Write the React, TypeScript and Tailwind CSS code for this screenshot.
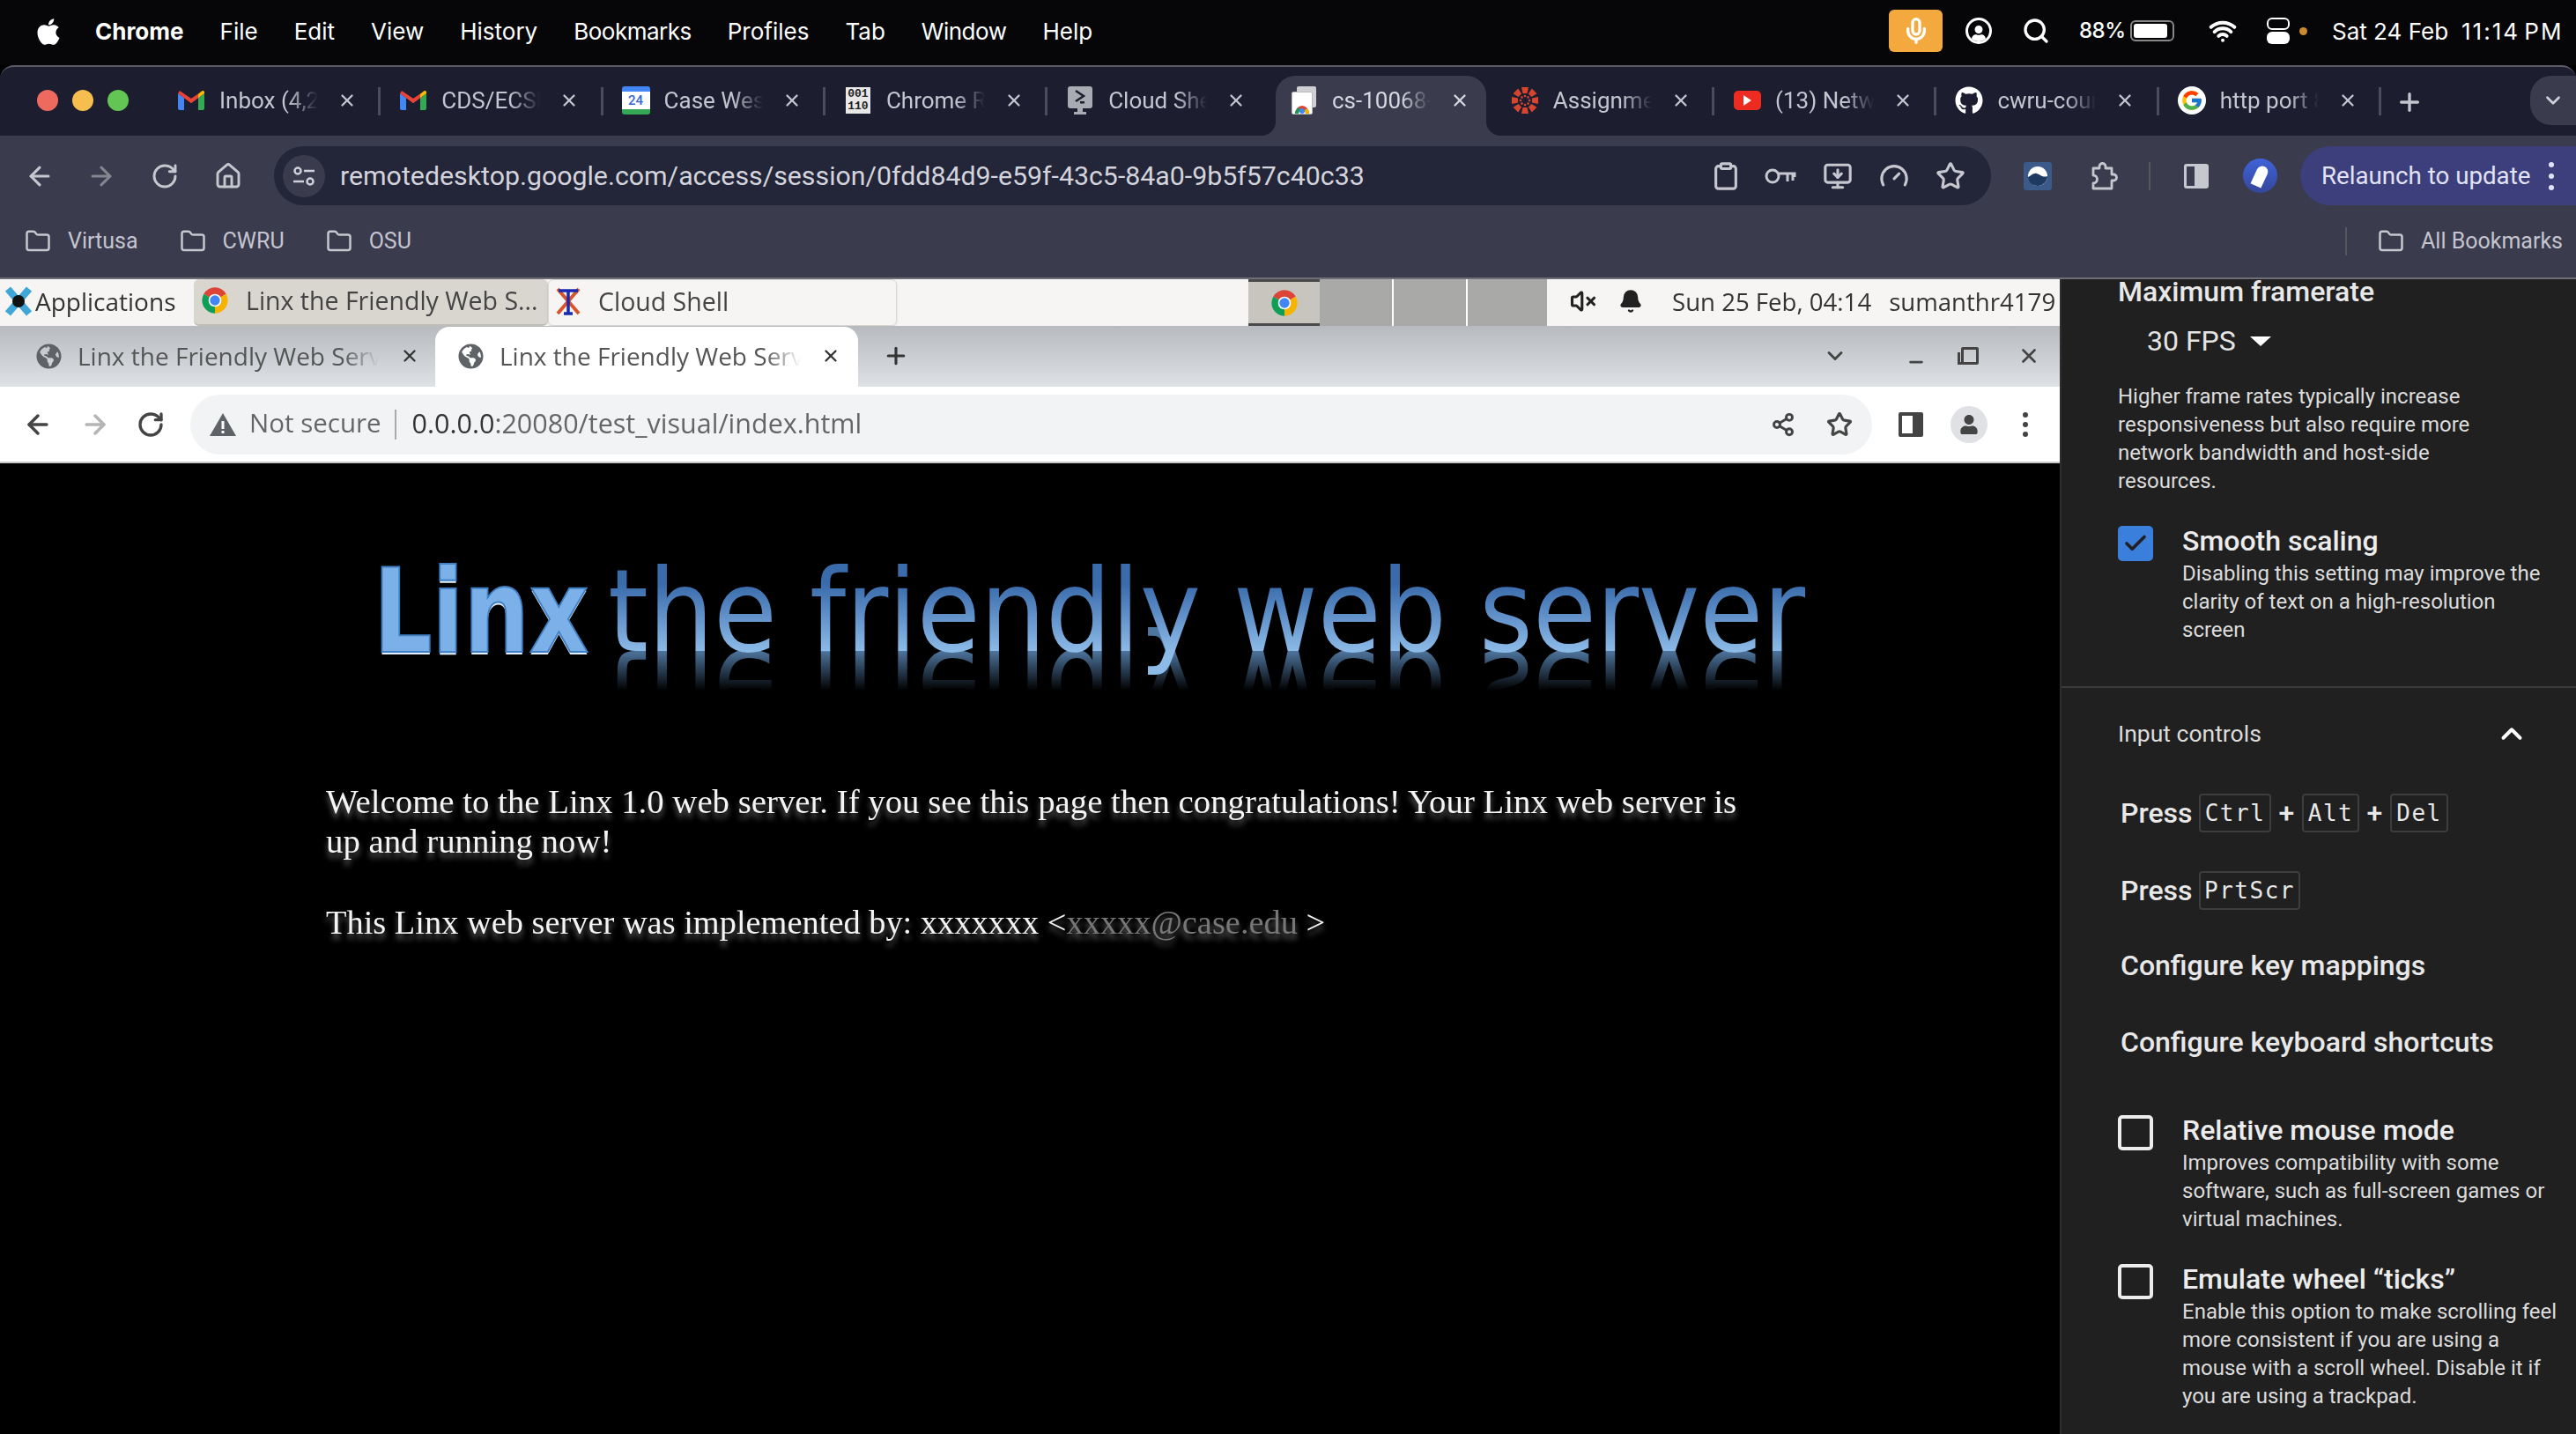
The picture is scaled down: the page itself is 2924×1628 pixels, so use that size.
import React from "react";
import { ArrowLeft, ArrowRight, RotateCw, Home, X, Plus, ChevronDown, ChevronUp, Clipboard, MonitorDown, Gauge, Star, Folder, Search, Wifi, Mic, Share2, Minus, Check, Bell, VolumeX } from "lucide-react";
import { FaApple, FaGithub, FaGlobeAmericas, FaUser } from "react-icons/fa";
import { FcGoogle } from "react-icons/fc";

const Gmail = () => (
  <svg viewBox="0 0 30 22" className="w-[30px] h-[22px]">
    <path fill="#4285F4" d="M0 3v17a2 2 0 0 0 2 2h5V8z" />
    <path fill="#34A853" d="M30 3v17a2 2 0 0 1-2 2h-5V8z" />
    <path fill="#EA4335" d="M0 3l15 11L30 3l-2-3-13 9L2 0z" />
    <path fill="#EA4335" d="M7 8l8 6 8-6V4l-8 5-8-5z" />
    <path fill="#FBBC04" d="M23 4l4-3.500A2 2 0 0 1 30 3l-7 5z" />
  </svg>
);
const Chromium = ({ s }: { s: string }) => (
  <svg viewBox="0 0 48 48" className={s}>
    <path fill="#DB4437" d="M24 24L4.950 13A22 22 0 0 1 43.050 13Z" />
    <path fill="#F4B400" d="M24 24L43.050 13A22 22 0 0 1 24 46Z" />
    <path fill="#0F9D58" d="M24 24L24 46A22 22 0 0 1 4.950 13Z" />
    <circle cx="24" cy="24" r="11" fill="#fff" />
    <circle cx="24" cy="24" r="8.500" fill="#4285F4" />
  </svg>
);
const Cal = () => (
  <div className="w-[32px] h-[32px] rounded-[3px] bg-white flex items-center justify-center border-t-[6px] border-b-[6px] border-t-[#4285f4] border-b-[#34a853] text-[#3367d6] text-[15px] font-['Roboto',sans-serif] font-medium leading-none">24</div>
);
const Binary = () => (
  <div className="w-[28px] h-[30px] bg-[#e8e8e8] text-[#222] text-[13px] leading-[14px] font-['Liberation_Mono',monospace] font-bold flex flex-col items-center justify-center">
    <span>001</span><span>110</span>
  </div>
);
const CloudShellFav = () => (
  <svg viewBox="0 0 32 32" className="w-[32px] h-[32px]">
    <rect x="2" y="0" width="28" height="25" rx="3" fill="#a9abb3" />
    <path d="M11 5l9 6-9 6" stroke="#1c1e30" strokeWidth="2.500" fill="none" />
    <rect x="16" y="17" width="5" height="2.500" fill="#1c1e30" />
    <rect x="13" y="25" width="6" height="4" fill="#a9abb3" />
    <rect x="9" y="29" width="14" height="3" fill="#a9abb3" />
  </svg>
);
const RemoteFav = () => (
  <div className="relative w-[28px] h-[32px]">
    <div className="absolute right-0 top-0 w-[22px] h-[24px] bg-[#cfcfd4] rounded-[2px]" />
    <div className="absolute left-0 bottom-0 w-[24px] h-[26px] bg-white rounded-[2px] flex items-end justify-center overflow-hidden border border-[#bbb]">
      <svg viewBox="0 0 20 20" className="w-[20px] h-[20px]">
        <path d="M2 20a8 9 0 0 1 16 0h-4a4 5 0 0 0-8 0z" fill="#db4437" />
        <path d="M2 20a8 9 0 0 1 4-7l2 3a4 5 0 0 0-2 4z" fill="#0f9d58" />
        <circle cx="10" cy="17" r="3" fill="#4285f4" />
        <path d="M14 20h4a8 9 0 0 0-2-6l-3 2z" fill="#f4b400" />
      </svg>
    </div>
  </div>
);
const Canvas = () => (
  <svg viewBox="0 0 32 32" className="w-[32px] h-[32px]" fill="#d8452f">
    {[0, 45, 90, 135, 180, 225, 270, 315].map((a) => (
      <g key={a} transform={`rotate(${a} 16 16)`}>
        <path d="M12 1h8l-1.500 7h-5z" />
        <circle cx="16" cy="11" r="1.300" />
      </g>
    ))}
  </svg>
);
const YT = () => (
  <div className="w-[31px] h-[22px] rounded-[5px] bg-[#ee2b20] flex items-center justify-center">
    <div className="w-0 h-0 border-y-[6px] border-y-transparent border-l-[9px] border-l-white" />
  </div>
);

const tabs: { fav: React.ReactNode; t: string; active?: boolean; sep?: boolean }[] = [
  { fav: <Gmail />, t: "Inbox (4,284)", sep: true },
  { fav: <Gmail />, t: "CDS/ECSE Stud", sep: true },
  { fav: <Cal />, t: "Case Western", sep: true },
  { fav: <Binary />, t: "Chrome Remote", sep: true },
  { fav: <CloudShellFav />, t: "Cloud Shell", sep: false },
  { fav: <RemoteFav />, t: "cs-10068-vm", active: true, sep: false },
  { fav: <Canvas />, t: "Assignments", sep: true },
  { fav: <YT />, t: "(13) Network", sep: true },
  { fav: <FaGithub className="text-white w-[32px] h-[32px]" />, t: "cwru-courses", sep: true },
  { fav: <span className="w-[32px] h-[32px] rounded-full bg-white flex items-center justify-center"><FcGoogle className="w-[26px] h-[26px]" /></span>, t: "http port 8080", sep: true },
];

const Tab = ({ fav, t, active, sep }: (typeof tabs)[number]) => (
  <div className={`relative h-[68px] shrink-0 flex items-center pb-[12px] ${active ? "w-[239.300px] mx-[6.500px] pl-[16px] bg-[#3a3b4c] rounded-t-[22px] text-[#d6d7e0]" : "w-[252.300px] pl-[21px] text-[#c4c5d0]"}`}>
    {active && (
      <span className="absolute -left-[16px] bottom-0 w-[16px] h-[16px] bg-[#3a3b4c]"><span className="block w-[16px] h-[16px] bg-[#1c1e30] rounded-br-[16px]" /></span>
    )}
    {active && (
      <span className="absolute -right-[16px] bottom-0 w-[16px] h-[16px] bg-[#3a3b4c]"><span className="block w-[16px] h-[16px] bg-[#1c1e30] rounded-bl-[16px]" /></span>
    )}
    <span className="w-[32px] flex justify-center shrink-0">{fav}</span>
    <span className="ml-[16px] w-[112px] overflow-hidden whitespace-nowrap text-[26px] leading-[32px] [mask-image:linear-gradient(90deg,#000_70%,transparent)]">{t}</span>
    <X className="ml-[22px] w-[22px] h-[22px] shrink-0" strokeWidth={2.500} />
    {sep && <span className="absolute right-0 top-[13px] w-[3px] h-[32px] bg-[#4b4c5c]" />}
  </div>
);

const Bookmark = ({ t, ml }: { t: string; ml: string }) => (
  <div className={`flex items-center gap-[16px] ${ml}`}>
    <Folder className="w-[36px] h-[30px] text-[#c7c7d0]" strokeWidth={2} />
    <span className="text-[25px] leading-[32px] text-[#c4c5d0]">{t}</span>
  </div>
);

const Kbd = ({ t, w }: { t: string; w: string }) => (
  <span className={`${w} h-[44px] rounded-[4px] border-2 border-[#3d3d3d] flex items-center justify-center font-['DejaVu_Sans_Mono',monospace] text-[26px] font-normal text-[#e8e8e8] tracking-[1.500px]`}>{t}</span>
);
const Option = ({ title, lines, on, mt }: { title: string; lines: string[]; on?: boolean; mt: string }) => (
  <div className={`flex ${mt}`}>
    <div className={`w-[40px] h-[40px] rounded-[5px] shrink-0 flex items-center justify-center ${on ? "bg-[#3b7fdc]" : "border-[4px] border-[#ececec]"}`}>
      {on && <Check className="w-[30px] h-[30px] text-[#202124]" strokeWidth={3} />}
    </div>
    <div className="ml-[33px]">
      <div className="h-[36px] leading-[34px] text-[32px] font-medium text-[#ececec] whitespace-nowrap">{title}</div>
      <div className="mt-[2px] text-[24px] leading-[32px] text-[#dcdcdc]">
        {lines.map((l) => <div key={l} className="whitespace-nowrap">{l}</div>)}
      </div>
    </div>
  </div>
);

export default function App() {
  return (
    <div className="w-[2924px] h-[1628px] overflow-hidden bg-black flex flex-col font-['Roboto',sans-serif]">
      {/* mac menu bar */}
      <div className="h-[74px] shrink-0 bg-[#060608] flex items-center text-white font-['Inter',sans-serif] text-[26px] pl-[40px] relative">
        <FaApple className="w-[30px] h-[34px] -mt-[3px]" />
        <div className="ml-[38px] flex items-center gap-[41px] -mt-[4px]">
          <span className="font-bold">Chrome</span>
          <span>File</span>
          <span>Edit</span>
          <span>View</span>
          <span>History</span>
          <span className="tracking-[-0.5px]">Bookmarks</span>
          <span>Profiles</span>
          <span>Tab</span>
          <span className="tracking-[-0.5px]">Window</span>
          <span>Help</span>
        </div>
        <div className="ml-auto flex items-center -mt-[4px] pr-[18px]">
          <span className="w-[61px] h-[48px] rounded-[6px] bg-[#f4a93f] flex items-center justify-center"><Mic className="w-[32px] h-[36px]" strokeWidth={2.500} /></span>
          <span className="ml-[26px] w-[30px] h-[30px] rounded-full border-[3px] border-white flex items-end justify-center overflow-hidden"><FaUser className="w-[16px] h-[18px]" /></span>
          <Search className="ml-[34px] w-[32px] h-[32px]" strokeWidth={2.500} />
          <span className="ml-[33px] w-[47px] text-[24px] font-medium tracking-[-0.5px]">88%</span>
          <span className="ml-[11px] w-[50px] h-[24px] rounded-[6px] border-2 border-[#888] p-[2px] flex"><span className="w-[38px] bg-white rounded-[3px]" /></span>
          <Wifi className="ml-[38px] w-[34px] h-[32px]" strokeWidth={3} />
          <span className="ml-[33px] flex flex-col gap-[2px]">
            <span className="w-[26px] h-[14px] rounded-[6px] border-2 border-white" />
            <span className="w-[26px] h-[14px] rounded-[6px] bg-white" />
          </span>
          <span className="ml-[11px] w-[9px] h-[9px] rounded-full bg-[#c98a30]" />
          <span className="ml-[28px] w-[130px] whitespace-nowrap">Sat 24 Feb</span>
          <span className="ml-[17px] w-[112px] text-right whitespace-nowrap tracking-[2px] [word-spacing:-4px]">11:14 PM</span>
        </div>
      </div>

      {/* Chrome window */}
      <div className="shrink-0 rounded-t-[16px] border-t-2 border-[#5a5b66] bg-[#1c1e30] overflow-hidden">
        <div className="h-[78px] pt-[10px] flex relative">
          <div className="w-[180px] flex items-start pt-[16px] pl-[42px] gap-[16px] shrink-0">
            <span className="w-[24px] h-[24px] rounded-full bg-[#ee6a5e]" />
            <span className="w-[24px] h-[24px] rounded-full bg-[#f5be4f]" />
            <span className="w-[24px] h-[24px] rounded-full bg-[#62c554]" />
          </div>
          {tabs.map((t) => <Tab key={t.t} {...t} />)}
          <Plus className="ml-[16px] mt-[14px] w-[32px] h-[32px] text-[#c4c5d0]" strokeWidth={2.500} />
          <div className="absolute right-0 top-[10px] w-[52px] h-[56px] rounded-l-[24px] bg-[#3a3b4c] flex items-center justify-center">
            <ChevronDown className="w-[26px] h-[26px] text-[#d0d0da]" strokeWidth={2.500} />
          </div>
        </div>

        <div className="bg-[#3a3b4c] h-[163px] border-b-2 border-[#6e6e76]">
          <div className="h-[79px] pt-[12px] flex items-center text-[#c7c7d0]">
            <ArrowLeft className="ml-[28px] w-[34px] h-[34px]" strokeWidth={2.200} />
            <ArrowRight className="ml-[36px] w-[34px] h-[34px] text-[#85858f]" strokeWidth={2.200} />
            <RotateCw className="ml-[39px] w-[32px] h-[32px]" strokeWidth={2.200} />
            <Home className="ml-[40px] w-[32px] h-[34px]" strokeWidth={2.200} />
            <div className="ml-[36px] w-[1949px] h-[67px] rounded-full bg-[#232538] flex items-center pl-[10px] pr-[29px]">
              <span className="w-[48px] h-[48px] rounded-full bg-[#3a3b4c] flex items-center justify-center">
                <svg viewBox="0 0 26 24" className="w-[26px] h-[24px]" fill="none" stroke="#d0d0da" strokeWidth="2.500">
                  <circle cx="6" cy="6" r="3.500" /><path d="M13 6h12M1 18h12" /><circle cx="20" cy="18" r="3.500" />
                </svg>
              </span>
              <span className="ml-[17px] text-[30.300px] leading-[40px] text-[#d4d4dc] whitespace-nowrap">remotedesktop.google.com/access/session/0fdd84d9-e59f-43c5-84a0-9b5f57c40c33</span>
              <div className="ml-auto flex items-center gap-[30px]">
                <Clipboard className="w-[34px] h-[34px] translate-x-[3px]" strokeWidth={2.200} />
                <svg viewBox="0 0 36 24" className="w-[36px] h-[24px]" fill="none" stroke="#c7c7d0" strokeWidth="3"><circle cx="9" cy="12" r="7" /><path d="M16 9h18v4M26 10v8M32 10v7" /></svg>
                <MonitorDown className="w-[34px] h-[34px]" strokeWidth={2.200} />
                <Gauge className="w-[34px] h-[34px]" strokeWidth={2.200} />
                <Star className="w-[34px] h-[34px]" strokeWidth={2.200} />
              </div>
            </div>
            <span className="ml-[37px] w-[32px] h-[32px] rounded-[3px] bg-[#3b5a8a] flex items-center justify-center shrink-0">
              <svg viewBox="0 0 24 24" className="w-[24px] h-[24px]"><circle cx="12" cy="12" r="11" fill="#fff" /><path d="M1 13c3-1 6-5 10-4s6 5 12 3c0 6-5 11-11 11S1 19 1 13z" fill="#1f3a60" /></svg>
            </span>
            <svg viewBox="0 0 34 34" className="ml-[41px] w-[34px] h-[34px] shrink-0" fill="none" stroke="#c7c7d0" strokeWidth="2.800" strokeLinejoin="round">
              <path d="M6 8h7V6a3.500 3.500 0 0 1 7 0v2h7v7h2a3.500 3.500 0 0 1 0 7h-2v9H6v-6a4.500 4.500 0 0 0 0-9z" />
            </svg>
            <span className="ml-[35px] w-[2px] h-[32px] bg-[#55565f] shrink-0" />
            <span className="ml-[38px] w-[28px] h-[28px] rounded-[3px] border-[3px] border-[#c7c7d0] flex justify-end shrink-0"><span className="w-[13px] bg-[#c7c7d0]" /></span>
            <span className="ml-[39px] w-[39px] h-[39px] rounded-full bg-gradient-to-b from-[#3f63d8] to-[#35479c] flex items-center justify-center shrink-0"><span className="w-[13px] h-[24px] rounded-t-full bg-white rotate-[25deg]" /></span>
            <div className="ml-[26px] flex-1 h-[67px] rounded-l-full bg-[#3c3f7c] flex items-center pl-[24px] text-[#e2e3f5]">
              <span className="text-[27.700px] whitespace-nowrap">Relaunch to update</span>
              <span className="ml-[21px] flex flex-col gap-[7px]">
                <i className="w-[6px] h-[6px] rounded-full bg-[#e2e3f5]" /><i className="w-[6px] h-[6px] rounded-full bg-[#e2e3f5]" /><i className="w-[6px] h-[6px] rounded-full bg-[#e2e3f5]" />
              </span>
            </div>
          </div>
          <div className="h-[82px] flex items-center">
            <Bookmark t="Virtusa" ml="ml-[25px]" />
            <Bookmark t="CWRU" ml="ml-[44px]" />
            <Bookmark t="OSU" ml="ml-[44px]" />
            <span className="ml-auto w-[2px] h-[32px] bg-[#55565f]" />
            <div className="mr-[15px] ml-[32px]">
              <Bookmark t="All Bookmarks" ml="ml-0" />
            </div>
          </div>
        </div>
      </div>

      {/* remote area */}
      <div className="flex flex-1 min-h-0">
        <div className="w-[2338px] shrink-0 flex flex-col blur-[0.6px]">
          {/* xfce panel */}
          <div className="h-[53px] shrink-0 bg-[#f6f5f3] flex items-stretch text-[#3c3c3c] text-[29px] leading-[38px] font-['Open_Sans',sans-serif] overflow-hidden">
            <div className="w-[220px] shrink-0 flex items-center pl-[6px] pb-[3px]">
              <svg viewBox="0 0 30 34" className="w-[30px] h-[34px]"><path d="M3 3l24 28M27 3L3 31" stroke="#3fa6d8" strokeWidth="8" /><circle cx="15" cy="17" r="7" fill="#111" /></svg>
              <span className="ml-[4px] text-[#333] text-[28px]">Applications</span>
            </div>
            <div className="w-[402px] shrink-0 bg-[#d9d6d0] rounded-[6px] flex items-center pl-[8px] pb-[3px] whitespace-nowrap border-b-2 border-[#c0bdb7]">
              <Chromium s="w-[32px] h-[32px]" />
              <span className="ml-[19px] text-[#444] text-[28.500px]">Linx the Friendly Web S...</span>
            </div>
            <div className="w-[396px] shrink-0 flex items-center pl-[6px] pb-[3px] rounded-[6px] border border-[#d8d6d0] shadow-sm">
              <svg viewBox="0 0 32 34" className="w-[32px] h-[34px]"><path d="M4 3l24 28M28 3L4 31" stroke="#d8542a" strokeWidth="4" /><path d="M5 5h22M16 5v26M11 31h10" stroke="#1a2ab0" strokeWidth="3.500" fill="none" /></svg>
              <span className="ml-[18px] text-[#444] text-[28.500px]">Cloud Shell</span>
            </div>
            <div className="w-[399px] shrink-0" />
            <div className="w-[81px] shrink-0 bg-[#c8c5bf] border-y-[3px] border-[#4a4a4a] flex items-center justify-center"><Chromium s="w-[32px] h-[32px]" /></div>
            <div className="w-[84px] shrink-0 bg-[#a9a9a7] border-r-2 border-white" />
            <div className="w-[84px] shrink-0 bg-[#a9a9a7] border-r-2 border-white" />
            <div className="w-[90px] shrink-0 bg-[#a9a9a7]" />
            <div className="flex-1 flex items-center whitespace-nowrap text-[27.600px] text-[#333] pb-[3px]">
              <VolumeX className="ml-[26px] w-[30px] h-[30px] text-[#222]" strokeWidth={2.500} />
              <Bell className="ml-[25px] w-[28px] h-[32px] text-[#222]" fill="#222" />
              <span className="ml-[33px]">Sun 25 Feb, 04:14</span>
              <span className="ml-[20px]">sumanthr4179</span>
            </div>
          </div>

          {/* remote chrome tabs */}
          <div className="h-[69px] shrink-0 bg-gradient-to-b from-[#b7bbc0] to-[#dee1e6] flex items-end text-[#555] text-[28px] font-['Open_Sans',sans-serif] relative">
            <div className="w-[494px] h-[68px] shrink-0 flex items-center pl-[41px] pb-[2px]">
              <FaGlobeAmericas className="w-[29px] h-[29px] text-[#5f6368]" />
              <span className="ml-[18px] w-[342px] overflow-hidden whitespace-nowrap [mask-image:linear-gradient(90deg,#000_88%,transparent)]">Linx the Friendly Web Server</span>
              <X className="ml-[24px] w-[22px] h-[22px] text-[#333]" strokeWidth={2.500} />
            </div>
            <div className="w-[480px] h-[68px] shrink-0 bg-white rounded-t-[16px] flex items-center pl-[26px] pb-[2px]">
              <FaGlobeAmericas className="w-[29px] h-[29px] text-[#5f6368]" />
              <span className="ml-[18px] w-[342px] overflow-hidden whitespace-nowrap [mask-image:linear-gradient(90deg,#000_88%,transparent)]">Linx the Friendly Web Server</span>
              <X className="ml-[23px] w-[22px] h-[22px] text-[#333]" strokeWidth={2.500} />
            </div>
            <div className="h-[68px] flex items-center ml-[28px] pb-[2px]"><Plus className="w-[30px] h-[30px] text-[#333]" strokeWidth={2.500} /></div>
            <div className="ml-auto h-[68px] flex items-center pr-[22px] pb-[2px] text-[#444]">
              <ChevronDown className="w-[28px] h-[28px]" strokeWidth={2.500} />
              <Minus className="ml-[67px] w-[22px] h-[22px] mt-[14px]" strokeWidth={3} />
              <span className="relative ml-[40px] w-[20px] h-[20px] border-[3px] border-[#444] rounded-[2px]">
                <span className="absolute -left-[7px] top-[3px] w-[14px] h-[14px] border-l-[3px] border-b-[3px] border-[#444]" />
              </span>
              <X className="ml-[44px] w-[26px] h-[26px]" strokeWidth={2.500} />
            </div>
          </div>

          {/* remote chrome nav */}
          <div className="h-[87px] shrink-0 bg-white border-b-2 border-[#c8c8c8] flex items-center text-[#555]">
            <ArrowLeft className="ml-[26px] w-[34px] h-[34px] text-[#444]" strokeWidth={2.500} />
            <ArrowRight className="ml-[31px] w-[34px] h-[34px] text-[#b5b5b5]" strokeWidth={2.500} />
            <RotateCw className="ml-[30px] w-[32px] h-[32px] text-[#444]" strokeWidth={2.500} />
            <div className="ml-[29px] w-[1909px] h-[68px] rounded-full bg-[#f1f3f4] flex items-center pl-[22px] font-['Open_Sans',sans-serif]">
              <svg viewBox="0 0 30 26" className="w-[30px] h-[26px]"><path d="M15 0l15 26H0z" fill="#5f6368" /><path d="M15 9v9M15 20v3" stroke="#fff" strokeWidth="3" /></svg>
              <span className="ml-[15px] text-[29.500px] leading-[40px] pb-[3px] text-[#666] whitespace-nowrap">Not secure</span>
              <span className="ml-[15px] w-[2px] h-[34px] bg-[#aaa]" />
              <span className="ml-[18px] text-[30.500px] leading-[40px] pb-[3px] text-[#666] whitespace-nowrap"><span className="text-[#333]">0.0.0.0</span>:20080/test_visual/index.html</span>
              <Share2 className="ml-auto w-[28px] h-[28px] text-[#444]" strokeWidth={2.500} />
              <Star className="ml-[35px] mr-[22px] w-[30px] h-[30px] text-[#444]" strokeWidth={2.500} />
            </div>
            <span className="ml-[30px] w-[28px] h-[28px] border-[4px] border-[#444] border-r-[12px] rounded-[2px]" />
            <span className="ml-[31px] w-[42px] h-[42px] rounded-full bg-[#dfe1e5] flex items-center justify-center"><FaUser className="w-[22px] h-[22px] text-[#444]" /></span>
            <span className="ml-[40px] flex flex-col gap-[5px]">
              <i className="w-[6px] h-[6px] rounded-full bg-[#444]" /><i className="w-[6px] h-[6px] rounded-full bg-[#444]" /><i className="w-[6px] h-[6px] rounded-full bg-[#444]" />
            </span>
          </div>

          {/* page */}
          <div className="flex-1 bg-black pt-[93px] pl-[424px]">
            <div className="flex items-start h-[150px] leading-[150px] whitespace-nowrap font-['DejaVu_Sans',sans-serif] [font-stretch:condensed]">
              <span className="inline-block w-[234px] text-[132px] origin-left scale-x-[0.88] font-bold text-[#7cb0e8] [-webkit-text-stroke:2px_#3f7fc4] [text-shadow:0_3px_0_#e4f0ff]">Linx</span>
              <div className="relative ml-[32px] text-[130px]">
                <span aria-hidden="true" className="absolute left-0 top-[90px] -scale-y-100 text-[#6fa6e0] [mask-image:linear-gradient(180deg,transparent_50%,rgba(0,0,0,0.7)_80%)]">the friendly web server</span>
                <span className="relative text-transparent bg-clip-text bg-gradient-to-b from-[#3a6cac] from-30% to-[#8dbbe8] to-80%">the friendly web server</span>
              </div>
            </div>
            <div className="-ml-[54px] mt-[118px] w-[1610px] font-['Liberation_Serif',serif] text-[38.800px] leading-[45px] text-[#f4f4f4] [text-shadow:0_6px_6px_rgba(255,255,255,0.4)]">
              <p>Welcome to the Linx 1.0 web server. If you see this page then congratulations! Your Linx web server is up and running now!</p>
              <p className="mt-[48px] text-[38.400px]">This Linx web server was implemented by: xxxxxxx &lt;<span className="text-[#777]">xxxxx@case.edu </span>&gt;</p>
            </div>
          </div>
        </div>

        {/* side panel */}
        <div className="flex-1 bg-[#202020] border-l-2 border-[#2e2e2e] overflow-hidden text-[#e8e8e8]">
          <div className="pl-[64px]">
            <div className="h-[30px] leading-[28px] text-[32px] font-medium whitespace-nowrap">Maximum framerate</div>
            <div className="mt-[20px] h-[40px] pl-[33px] flex items-center text-[32px] text-[#e4e4e4]">
              <span>30 FPS</span>
              <span className="ml-[16px] w-0 h-0 border-x-[12px] border-x-transparent border-t-[11px] border-t-white" />
            </div>
            <div className="mt-[27px] text-[24px] leading-[32px] text-[#dcdcdc]">
              <div>Higher frame rates typically increase</div>
              <div>responsiveness but also require more</div>
              <div>network bandwidth and host-side</div>
              <div>resources.</div>
            </div>
            <Option on mt="mt-[35px]" title="Smooth scaling" lines={["Disabling this setting may improve the", "clarity of text on a high-resolution", "screen"]} />
          </div>
          <div className="mt-[48px] h-[2px] bg-[#3a3a3a]" />
          <div className="pl-[64px]">
            <div className="mt-[32px] h-[40px] flex items-center justify-between pr-[54px]">
              <span className="text-[26.500px] text-[#dcdcdc]">Input controls</span>
              <ChevronUp className="w-[38px] h-[38px] text-white" strokeWidth={2.500} />
            </div>
            <div className="mt-[48px] h-[44px] pl-[3px] flex items-center text-[32px] font-medium">
              <span className="w-[89px]">Press</span>
              <Kbd t="Ctrl" w="w-[82px]" />
              <span className="w-[35px] text-center">+</span>
              <Kbd t="Alt" w="w-[65px]" />
              <span className="w-[35px] text-center">+</span>
              <Kbd t="Del" w="w-[66px]" />
            </div>
            <div className="mt-[44px] h-[44px] pl-[3px] flex items-center text-[32px] font-medium">
              <span className="w-[89px]">Press</span>
              <Kbd t="PrtScr" w="w-[115px]" />
            </div>
            <div className="mt-[43px] pl-[3px] h-[40px] leading-[40px] text-[32px] font-medium">Configure key mappings</div>
            <div className="mt-[47px] pl-[3px] h-[40px] leading-[40px] text-[32px] font-medium">Configure keyboard shortcuts</div>
            <Option mt="mt-[63px]" title="Relative mouse mode" lines={["Improves compatibility with some", "software, such as full-screen games or", "virtual machines."]} />
            <Option mt="mt-[35px]" title="Emulate wheel “ticks”" lines={["Enable this option to make scrolling feel", "more consistent if you are using a", "mouse with a scroll wheel. Disable it if", "you are using a trackpad."]} />
          </div>
        </div>
      </div>
    </div>
  );
}
